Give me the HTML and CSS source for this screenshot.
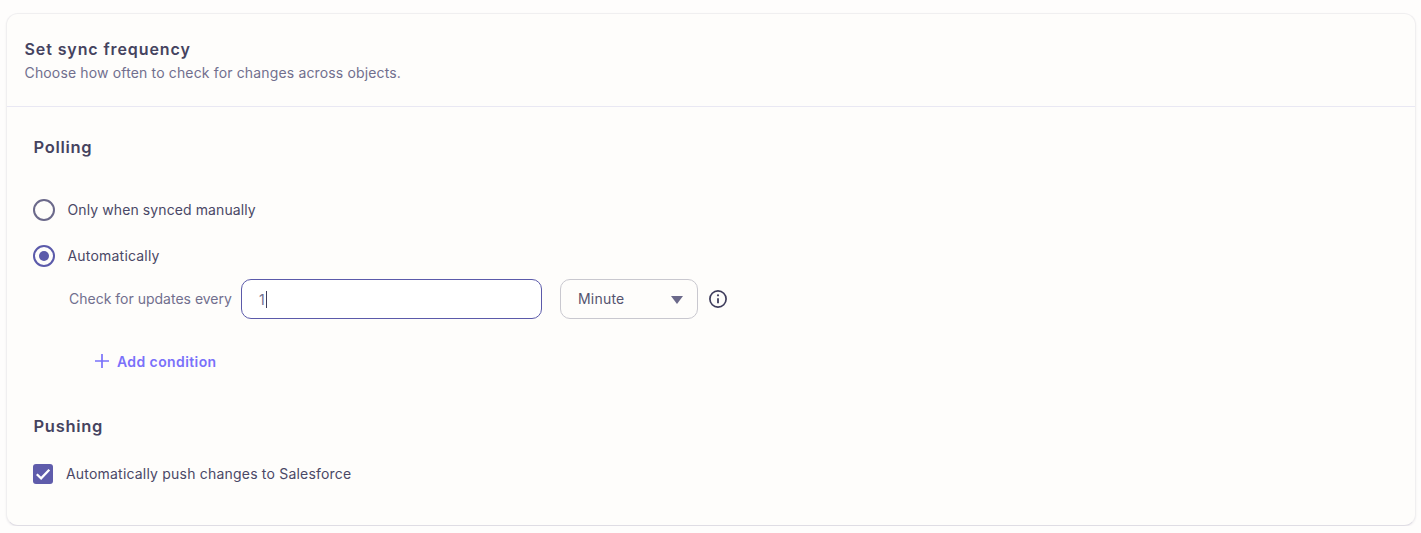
FILE: index.html
```html
<!DOCTYPE html>
<html lang="en">
<head>
    <meta charset="UTF-8">
    <title>Set sync frequency</title>
    <link rel="stylesheet" href="styles.css">
</head>
<body>
    <div class="card">
        <div class="card-header">
            <h1>Set sync frequency</h1>
            <p>Choose how often to check for changes across objects.</p>
        </div>

        <div class="card-body">
            <!-- Polling -->
            <h2 class="section-title">Polling</h2>

            <div class="radio-row first">
                <span class="radio"></span>
                <span class="option-label short">Only when synced manually</span>
            </div>
            <div class="radio-row second">
                <span class="radio checked"></span>
                <span class="option-label">Automatically</span>
            </div>

            <div class="update-row">
                <span class="update-label">Check for updates every</span>
                <div class="text-field"><span class="field-value">1</span><span class="caret"></span></div>
                <div class="select-field">
                    <span class="select-value">Minute</span>
                    <span class="arrow"></span>
                </div>
                <svg class="info-icon" width="20" height="20" viewBox="0 0 20 20" fill="none" stroke="#3f3d5c">
                    <circle cx="10" cy="10" r="8.1" stroke-width="1.7"/>
                    <path d="M10 9.2v5" stroke-width="1.8"/>
                    <circle cx="10" cy="6.3" r="1.1" fill="#3f3d5c" stroke="none"/>
                </svg>
            </div>

            <div class="add-condition">
                <svg width="16" height="16" viewBox="0 0 16 16" fill="none" stroke="#7a71fa" stroke-width="1.7">
                    <path d="M8 1v14M1 8h14"/>
                </svg>
                <span>Add condition</span>
            </div>

            <!-- Pushing -->
            <h2 class="section-title pushing">Pushing</h2>

            <div class="check-row">
                <span class="checkbox">
                    <svg width="20" height="20" viewBox="0 0 20 20" fill="none" stroke="#fff" stroke-width="2.3">
                        <path d="M3.8 10.2l4.3 4.2 8.2-8.6"/>
                    </svg>
                </span>
                <span class="option-label">Automatically push changes to Salesforce</span>
            </div>
        </div>
    </div>
</body>
</html>
```

FILE: styles.css
```css
* {
    box-sizing: border-box;
}

body {
    margin: 0;
    padding: 13px 5px 0 6px;
    background-color: #fefdfc;
    font-family: Inter, 'Noto Sans', sans-serif;
    color: #4a4866;
}

.card {
    height: 513px;
    background-color: #fefdfb;
    border: 1px solid #f0eff0;
    border-bottom-color: #dfdde4;
    border-radius: 12px;
    box-shadow: 0 1px 2px rgba(60, 55, 90, 0.08);
}

.card-header {
    height: 93px;
    padding: 25px 18px 0 17.5px;
    border-bottom: 1px solid #e9e8f3;
}

.card-header h1 {
    margin: 0;
    font-size: 16px;
    line-height: 20px;
    font-weight: 600;
    letter-spacing: 0.9px;
    color: #45435f;
}

.card-header p {
    margin: 4px 0 0 0;
    font-size: 14px;
    line-height: 20px;
    letter-spacing: 0.15px;
    color: #716f8e;
}

.card-body {
    padding: 30px 0 0 26px;
}

.section-title {
    margin: 0;
    padding-left: 0.5px;
    font-size: 16.5px;
    line-height: 20px;
    font-weight: 600;
    letter-spacing: 0.7px;
    color: #45435f;
}

.radio-row {
    display: flex;
    align-items: center;
    gap: 12.5px;
    height: 22px;
}

.radio-row.first {
    margin-top: 42px;
}

.radio-row.second {
    margin-top: 24px;
}

.radio {
    width: 22px;
    height: 22px;
    border: 2px solid #6b698a;
    border-radius: 50%;
    flex-shrink: 0;
}

.radio.checked {
    display: flex;
    align-items: center;
    justify-content: center;
    border-color: #5b5aaa;
}

.radio.checked::after {
    content: "";
    width: 10px;
    height: 10px;
    border-radius: 50%;
    background-color: #5b5aaa;
}

.option-label {
    font-size: 14px;
    line-height: 20px;
    letter-spacing: 0.2px;
    color: #4a4866;
}

.option-label.short {
    letter-spacing: 0.1px;
}

.update-row {
    display: flex;
    align-items: center;
    height: 40px;
    margin-top: 12px;
    padding-left: 36px;
}

.update-label {
    width: 172px;
    padding-bottom: 2px;
    font-size: 14px;
    color: #716f8e;
}

.text-field {
    display: flex;
    align-items: center;
    width: 301px;
    height: 40px;
    padding-left: 17px;
    background-color: #fff;
    border: 1px solid #5b5aaa;
    border-radius: 10px;
    font-size: 14px;
    color: #716f8e;
}

.caret {
    width: 1px;
    height: 17px;
    margin-left: 1px;
    background-color: #3f3d5c;
}

.select-field {
    display: flex;
    align-items: center;
    justify-content: space-between;
    width: 138px;
    height: 40px;
    margin-left: 18px;
    padding: 0 14px 0 17px;
    border: 1px solid #c9c8cf;
    border-radius: 10px;
    font-size: 14px;
    color: #55536f;
}

.select-value {
    padding-bottom: 2px;
    letter-spacing: 0.2px;
}

.arrow {
    width: 0;
    height: 0;
    margin-top: 1px;
    border-left: 6px solid transparent;
    border-right: 6px solid transparent;
    border-top: 8px solid #6b698a;
}

.info-icon {
    margin-left: 10px;
    margin-bottom: 1px;
}

.add-condition {
    display: flex;
    align-items: center;
    gap: 7px;
    height: 20px;
    margin-top: 32px;
    padding-left: 61px;
    font-size: 14px;
    font-weight: 600;
    letter-spacing: 0.4px;
    color: #7a71fa;
}

.pushing {
    margin-top: 45px;
}

.check-row {
    display: flex;
    align-items: center;
    gap: 13px;
    height: 20px;
    margin-top: 28px;
}

.checkbox {
    display: flex;
    width: 20px;
    height: 20px;
    background-color: #5f5cab;
    border-radius: 3px;
}
```
